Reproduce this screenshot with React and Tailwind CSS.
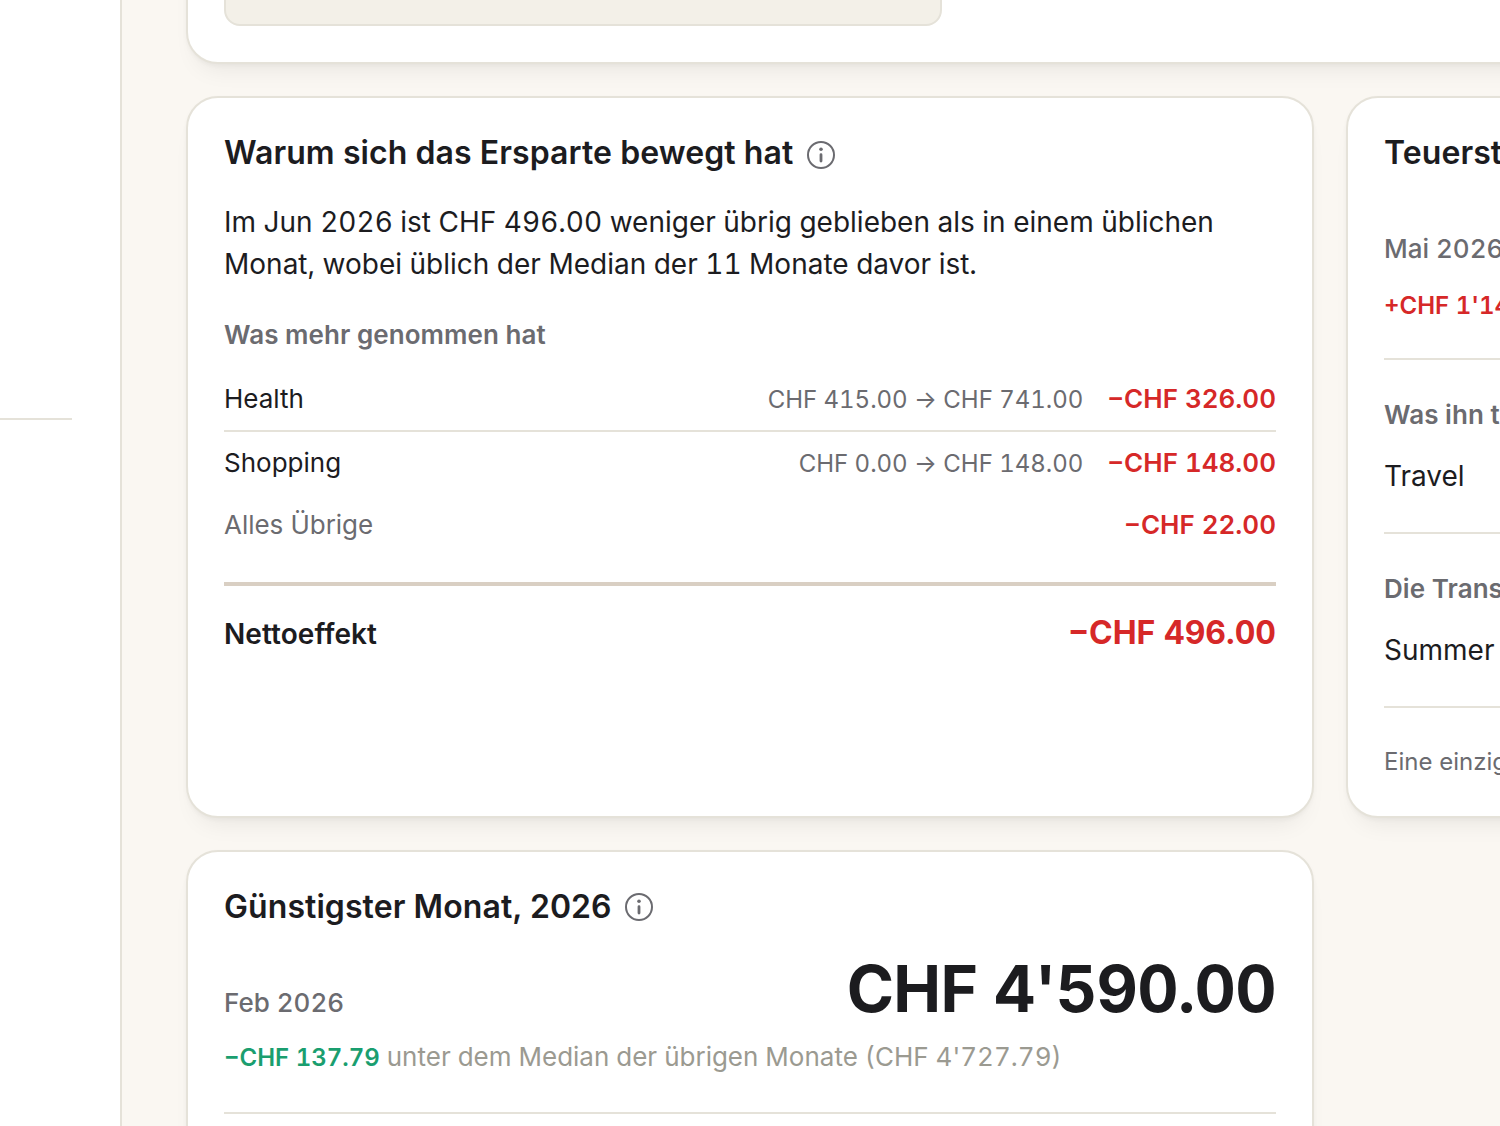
const drivers = [
  { name: "Health", change: "CHF 415.00 → CHF 741.00", amount: "−CHF 326.00" },
  { name: "Shopping", change: "CHF 0.00 → CHF 148.00", amount: "−CHF 148.00" },
];

function Card({ className = "", children }) {
  return (
    <section
      className={`box-border rounded-[32px] border-2 border-[#e5e2d9] bg-white px-9 shadow-[0_2px_4px_rgba(28,28,31,0.04),0_16px_24px_-12px_rgba(28,28,31,0.08)] ${className}`}
    >
      {children}
    </section>
  );
}

function InfoIcon({ className }) {
  return (
    <svg
      width="28"
      height="28"
      viewBox="0 0 28 28"
      fill="none"
      className={`shrink-0 text-[#6b6b70] ${className}`}
    >
      <circle cx="14" cy="14" r="13" stroke="currentColor" strokeWidth="2" />
      <circle cx="14" cy="8.3" r="1.8" fill="currentColor" />
      <path
        d="M14 13.7v6.4"
        stroke="currentColor"
        strokeWidth="2.8"
        strokeLinecap="round"
      />
    </svg>
  );
}

function CardTitle({ children, iconClass = "mt-1" }) {
  return (
    <div className="mt-px flex h-9 items-center gap-3.5">
      <h2 className="text-[32px] leading-9 font-semibold tracking-[0.08px]">
        {children}
      </h2>
      <InfoIcon className={iconClass} />
    </div>
  );
}

export default function App() {
  return (
    <div className="flex h-[1126px] w-[1500px] overflow-hidden bg-[#faf7f2] font-['Inter',sans-serif] whitespace-nowrap text-[#1c1c1f]">
      <aside className="w-[122px] shrink-0 border-r-2 border-[#e5e2d9] bg-white pt-[418px]">
        <div className="mr-12 h-0.5 bg-[#e5e2d9]" />
      </aside>

      <main className="ml-16 flex w-[2288px] shrink-0 flex-col gap-8">
        <Card className="-mt-16 h-32 shrink-0">
          <div className="h-[88px] w-[718px] rounded-2xl border-2 border-[#e5e2d9] bg-[#f3f0e8]" />
        </Card>

        <div className="grid shrink-0 grid-cols-[1128px_1128px] gap-8">
          <Card className="h-[722px] pt-9">
            <CardTitle>Warum sich das Ersparte bewegt hat</CardTitle>
            <p className="mt-[30px] text-[28px] leading-[42px] tabular-nums">
              Im Jun 2026 ist CHF 496.00 weniger übrig geblieben als in einem
              üblichen
              <br />
              Monat, wobei üblich der Median der 11 Monate davor ist.
            </p>
            <h3 className="mt-[31px] text-[26px] leading-[38px] font-semibold tracking-[0.06px] text-[#6b6b70]">
              Was mehr genommen hat
            </h3>
            <ul className="mt-3.5 text-[26px]">
              {drivers.map((row) => (
                <li
                  key={row.name}
                  className="flex h-16 items-baseline border-b-2 border-[#e5e2d9] leading-[62px] last:h-[62px] last:border-b-0"
                >
                  <span className="grow">{row.name}</span>
                  <span className="text-2xl leading-[62px] tracking-[-0.03px] text-[#6b6b70] tabular-nums">
                    {row.change}
                  </span>
                  <span className="ml-6 font-semibold text-[#d62828] tabular-nums">
                    {row.amount}
                  </span>
                </li>
              ))}
            </ul>
            <div className="flex justify-between text-[26px] leading-[62px]">
              <span className="tracking-[-0.04px] text-[#6b6b70]">
                Alles Übrige
              </span>
              <span className="font-semibold text-[#d62828] tabular-nums">
                −CHF 22.00
              </span>
            </div>
            <div className="mt-[26px] flex items-baseline justify-between border-t-4 border-[#d9cfc3] pt-6 leading-[46px]">
              <span className="text-[28px] font-semibold tracking-[0.06px]">
                Nettoeffekt
              </span>
              <span className="text-[32px] font-bold text-[#d62828] tabular-nums">
                −CHF 496.00
              </span>
            </div>
          </Card>

          <Card className="h-[722px] pt-9">
            <CardTitle>Teuerster Monat, 2026</CardTitle>
            <p className="mt-[60px] text-[26px] leading-9 font-medium text-[#6b6b70] tabular-nums">
              Mai 2026
            </p>
            <p className="mt-[21px] text-2xl leading-9 font-semibold text-[#d62828] tabular-nums">
              +CHF 1'140.00
            </p>
            <div className="mt-[34px] border-t-2 border-[#e5e2d9] pt-9">
              <h3 className="text-[26px] leading-[38px] font-semibold tracking-[0.06px] text-[#6b6b70]">
                Was ihn teuer machte
              </h3>
              <p className="mt-[21px] text-[28px] leading-[42px]">Travel</p>
            </div>
            <div className="mt-[35px] border-t-2 border-[#e5e2d9] pt-9">
              <h3 className="text-[26px] leading-[38px] font-semibold tracking-[0.06px] text-[#6b6b70]">
                Die Transaktion
              </h3>
              <p className="mt-[21px] text-[28px] leading-[42px]">
                Summer holiday
              </p>
            </div>
            <p className="mt-[35px] border-t-2 border-[#e5e2d9] pt-9 text-2xl leading-9 text-[#6b6b70]">
              Eine einzige Transaktion
            </p>
          </Card>

          <Card className="h-[722px] pt-9">
            <CardTitle iconClass="-ml-px">
              Günstigster Monat,{" "}
              <span className="tracking-normal">2026</span>
            </CardTitle>
            <div className="mt-[29px] flex h-[70px] items-baseline justify-between leading-[70px]">
              <span className="text-[26px] font-medium text-[#6b6b70] tabular-nums">
                Feb 2026
              </span>
              <span className="text-[64px] font-bold tracking-[-0.01em] tabular-nums">
                CHF 4'590.00
              </span>
            </div>
            <p className="mt-3.5 h-[38px] text-[26px] leading-[38px] text-[#9b9a91] tabular-nums">
              <span className="text-2xl leading-[38px] font-semibold text-[#1a9e6f]">
                −CHF 137.79
              </span>{" "}
              unter dem Median der übrigen Monate (CHF 4'727.79)
            </p>
            <div className="mt-9 h-0.5 bg-[#e5e2d9]" />
          </Card>
        </div>
      </main>
    </div>
  );
}
